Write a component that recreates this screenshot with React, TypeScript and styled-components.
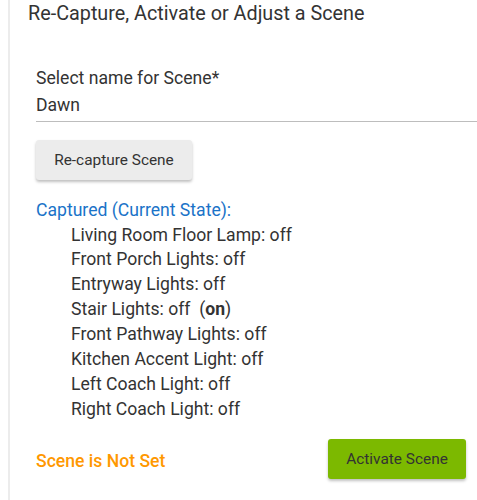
import { createGlobalStyle, styled } from "styled-components";

const GlobalStyle = createGlobalStyle`
  html, body {
    margin: 0;
    padding: 0;
    background: #ffffff;
    font-family: Roboto, "Liberation Sans", sans-serif;
  }
`;

type deviceType = {
  name: string;
  state: string;
  current?: string;
};

const DEVICES: deviceType[] = [
  { name: "Living Room Floor Lamp", state: "off" },
  { name: "Front Porch Lights", state: "off" },
  { name: "Entryway Lights", state: "off" },
  { name: "Stair Lights", state: "off", current: "on" },
  { name: "Front Pathway Lights", state: "off" },
  { name: "Kitchen Accent Light", state: "off" },
  { name: "Left Coach Light", state: "off" },
  { name: "Right Coach Light", state: "off" },
];

const App = () => {
  return (
    <>
      <GlobalStyle />
      <Panel>
        <Title>Re-Capture, Activate or Adjust a Scene</Title>
        <Body>
          <Field>
            <FieldLabel>Select name for Scene*</FieldLabel>
            <FieldValue>Dawn</FieldValue>
          </Field>

          <GreyButton>Re-capture Scene</GreyButton>

          <Captured>Captured (Current State):</Captured>
          <DeviceList>
            {DEVICES.map((device: deviceType, index: number) => (
              <Device key={index}>
                {device.name}: {device.state}
                {device.current && (
                  <>
                    {"\u00a0 ("}
                    <b>{device.current}</b>)
                  </>
                )}
              </Device>
            ))}
          </DeviceList>

          <Footer>
            <Status>Scene is Not Set</Status>
            <GreenButton>Activate Scene</GreenButton>
          </Footer>
        </Body>
      </Panel>
    </>
  );
};

const Panel = styled.div`
  margin-left: 8px;
  border-left: 2px solid #ececec;
  padding: 1px 0 0 18px;
  height: 499px;
  color: #333333;
  overflow: hidden;
`;

const Title = styled.div`
  font-size: 19.8px;
  line-height: 26px;
  color: #333333;
`;

const Body = styled.div`
  padding: 38px 0 0 8px;
  display: flex;
  flex-direction: column;
  align-items: flex-start;
`;

const Field = styled.div`
  align-self: stretch;
  margin-right: -20px;
  border-bottom: 1px solid #bdbdbd;
  padding-bottom: 3px;
`;

const FieldLabel = styled.div`
  font-size: 17.6px;
  line-height: 26px;
  color: #333333;
`;

const FieldValue = styled.div`
  font-size: 17.6px;
  line-height: 26px;
  padding-top: 1px;
  color: #333333;
`;

const GreyButton = styled.button`
  margin-top: 18px;
  width: 156px;
  height: 40px;
  padding: 0;
  border: none;
  border-radius: 3px;
  background: #ececec;
  color: #333333;
  font-family: Roboto, "Liberation Sans", sans-serif;
  font-size: 15.4px;
  box-shadow: 0 2px 3px rgba(0, 0, 0, 0.25);
`;

const Captured = styled.div`
  margin-top: 18px;
  font-size: 17.6px;
  line-height: 24px;
  color: #1a73c8;
`;

const DeviceList = styled.div`
  padding: 0.5px 0 0 35px;
  display: flex;
  flex-direction: column;
`;

const Device = styled.div`
  font-size: 17.6px;
  line-height: 24.95px;
  color: #333333;

  & b {
    font-weight: 700;
  }
`;

const Footer = styled.div`
  align-self: stretch;
  margin-top: 17px;
  display: flex;
  align-items: center;
  justify-content: space-between;
  padding-right: 11px;
`;

const Status = styled.span`
  padding-top: 3px;
  font-size: 17.6px;
  font-weight: 500;
  color: #ff9800;
`;

const GreenButton = styled.button`
  width: 138px;
  height: 40px;
  border: none;
  border-radius: 3px;
  background: #7cb900;
  color: #333333;
  font-family: Roboto, "Liberation Sans", sans-serif;
  font-size: 15.4px;
  box-shadow: 0 2px 3px rgba(0, 0, 0, 0.25);
`;

export default App;
